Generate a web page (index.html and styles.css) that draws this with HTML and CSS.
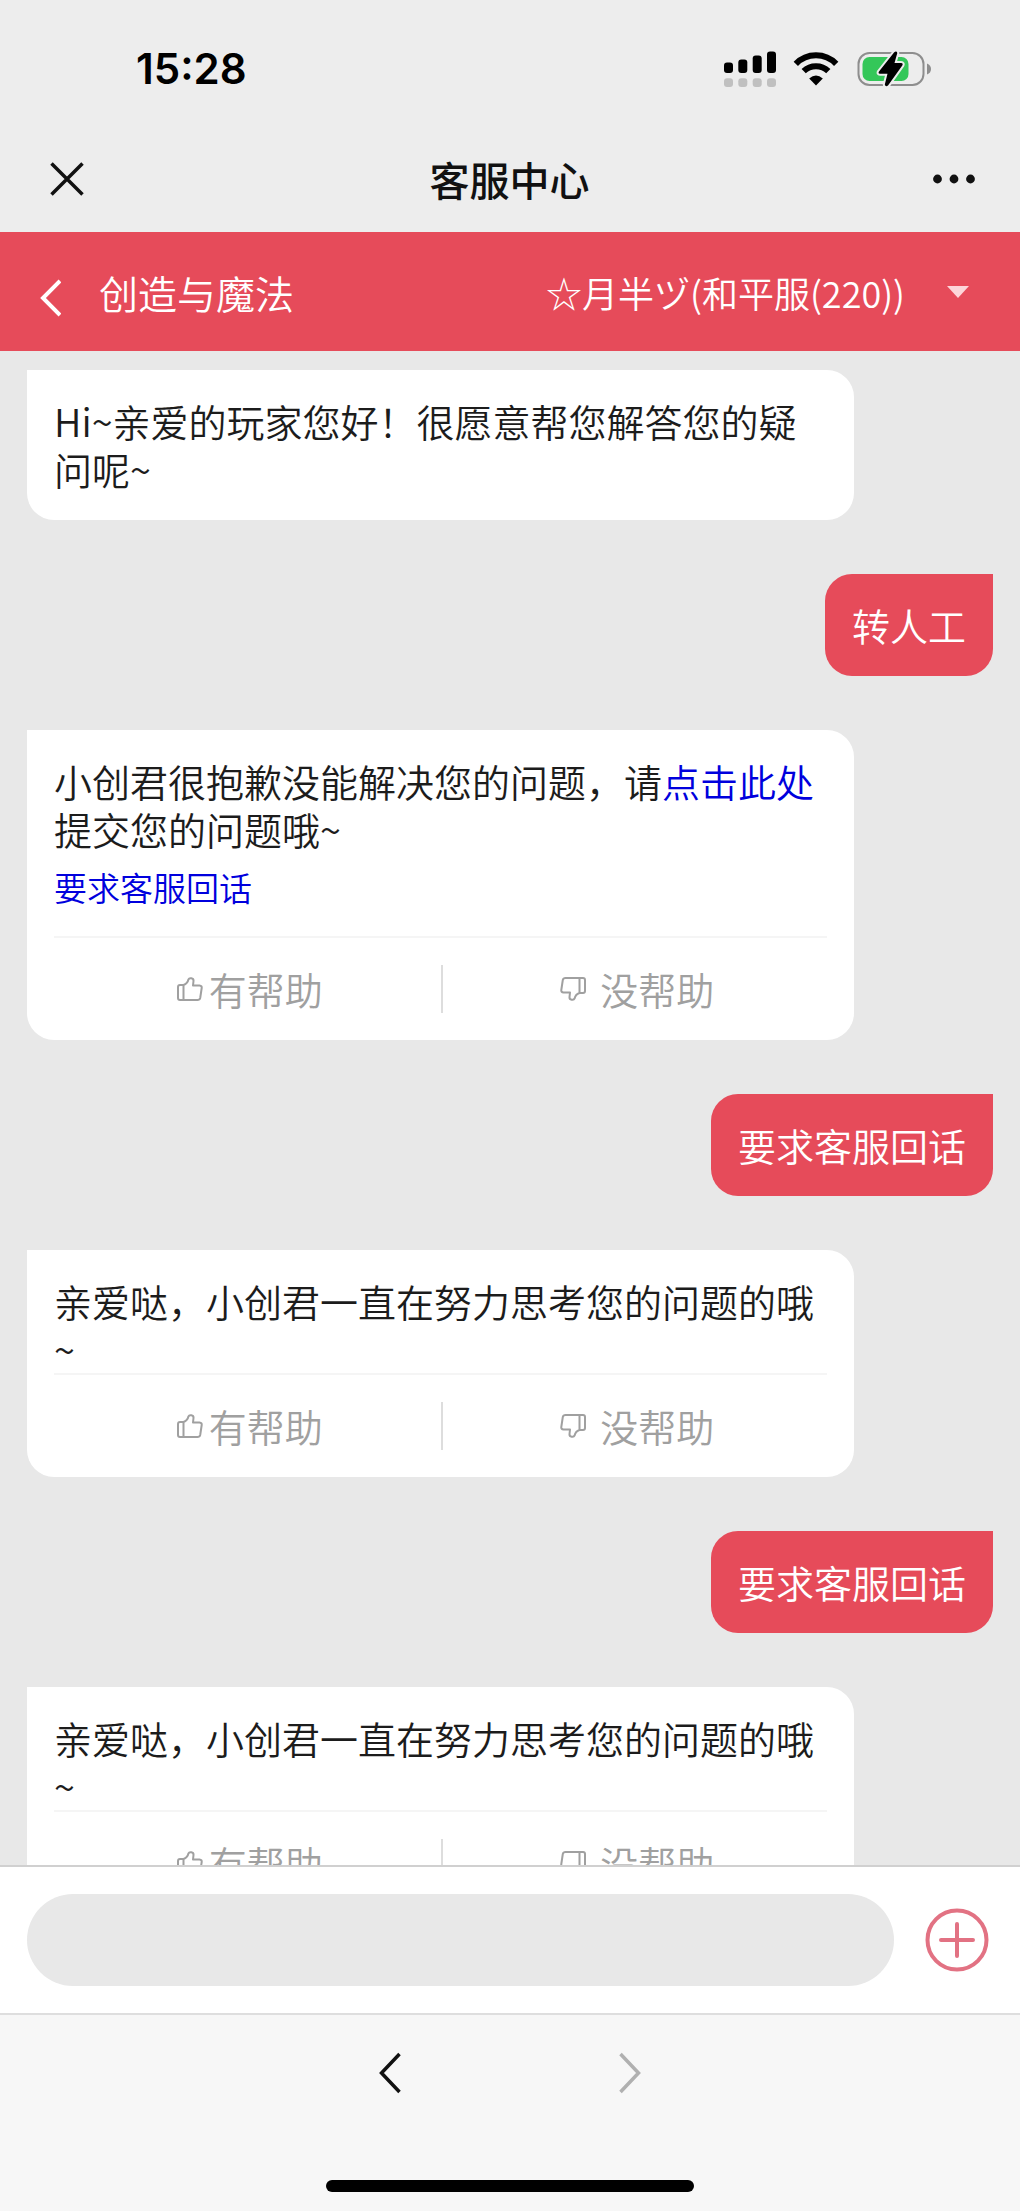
FILE: index.html
```html
<!DOCTYPE html>
<html lang="zh-CN">
<head>
<meta charset="utf-8">
<meta name="viewport" content="width=device-width, initial-scale=1">
<title>客服中心</title>
<link rel="stylesheet" href="styles.css">
</head>
<body>
<svg class="sprite" aria-hidden="true">
  <symbol id="thumb" viewBox="0 0 26 24">
    <path d="M3 8H6.500C9.500 7 11 4.500 11.500 2.300C12.200 .6 16.800 .8 16.500 4L16 8.500H22.500Q25 8.800 24.700 11L23.200 21Q22.700 23 20.500 23H3Q1 23 1 21V10Q1 8 3 8ZM6.500 8V23" fill="none" stroke="currentColor" stroke-width="2" stroke-linejoin="round"/>
  </symbol>
</svg>
<div class="app">
  <div class="status">
    <time class="clock">15:28</time>
    <div class="indicators">
      <svg class="signal" viewBox="0 0 52 36" width="52" height="36" aria-label="信号">
        <rect x="0" y="11.500" width="9" height="10.500" rx="3"/><rect x="14.300" y="8.500" width="9" height="13.500" rx="3"/><rect x="28.700" y="4.500" width="9" height="17.500" rx="3"/><rect x="43" y="0.500" width="9" height="21.500" rx="3"/>
        <g fill="#c0c0c0"><rect x="0" y="27.300" width="9" height="8.700" rx="3"/><rect x="14.300" y="27.300" width="9" height="8.700" rx="3"/><rect x="28.700" y="27.300" width="9" height="8.700" rx="3"/><rect x="43" y="27.300" width="9" height="8.700" rx="3"/></g>
      </svg>
      <svg class="wifi" viewBox="0 0 46 36" width="46" height="36" aria-label="无线网络">
        <path d="M2.800 12.800A28 28 0 0 1 43.200 12.800M10.700 20.200A17.500 17.500 0 0 1 35.300 20.200" fill="none" stroke="#000" stroke-width="6"/>
        <path d="M23 34.500L16.200 27.500Q23 21.500 29.800 27.500Z"/>
      </svg>
      <svg class="battery" viewBox="0 0 76 36" width="76" height="36" aria-label="正在充电">
        <rect x="2.500" y="2" width="65" height="32" rx="11" fill="none" stroke="#8e8e8e" stroke-width="2"/>
        <path d="M71 12.500Q75 14 75 18T71 23.500Z" fill="#8e8e8e"/>
        <rect x="6.500" y="6" width="46" height="24" rx="7" fill="#34c759"/>
        <path d="M38 1.500L23 20.500Q21.800 22.700 24 22.700H31.500L28.800 33.500Q29.500 36.500 32 34.500L46.300 14.500Q47.500 12 45 12H38.500L41.300 2Q40.500-.5 38 1.500Z" stroke="#ededed" stroke-width="4" paint-order="stroke"/>
      </svg>
    </div>
  </div>

  <header class="titlebar">
    <button class="icon-btn" type="button" aria-label="关闭">
      <svg viewBox="0 0 44 36" width="44" height="36"><path d="M7.500 2.500L38.500 33.500M38.500 2.500L7.500 33.500" fill="none" stroke="#111" stroke-width="3.500"/></svg>
    </button>
    <h1 class="page-title">客服中心</h1>
    <button class="icon-btn" type="button" aria-label="更多">
      <svg viewBox="0 0 42 36" width="42" height="36"><g fill="#111"><circle cx="4.500" cy="18" r="4.400"/><circle cx="21" cy="18" r="4.400"/><circle cx="37.500" cy="18" r="4.400"/></g></svg>
    </button>
  </header>

  <div class="gamebar">
    <a class="game" href="#">
      <svg viewBox="0 0 22 52" width="22" height="52" aria-hidden="true"><path d="M21 15L4 32L21 49" fill="none" stroke="#fff" stroke-width="4"/></svg>
      <span>创造与魔法</span>
    </a>
    <button class="account" type="button">
      <span>☆月半ヅ(和平服(220))</span>
      <svg viewBox="0 0 22 12" width="22" height="12" aria-hidden="true"><path d="M0 0H22L11 12Z" fill="#fdd5d9"/></svg>
    </button>
  </div>

  <main class="chat">
    <article class="bubble agent"><p>Hi~亲爱的玩家您好！很愿意帮您解答您的疑问呢~</p></article>
    <article class="bubble user"><p>转人工</p></article>
    <article class="bubble agent">
      <p>小创君很抱歉没能解决您的问题，请<a href="#">点击此处</a>提交您的问题哦~</p>
      <a class="suggestion" href="#">要求客服回话</a>
      <div class="feedback">
        <button class="vote up" type="button"><svg class="thumb"><use href="#thumb"/></svg>有帮助</button>
        <button class="vote down" type="button"><svg class="thumb"><use href="#thumb"/></svg>没帮助</button>
      </div>
    </article>
    <article class="bubble user"><p>要求客服回话</p></article>
    <article class="bubble agent">
      <p>亲爱哒，小创君一直在努力思考您的问题的哦~</p>
      <div class="feedback">
        <button class="vote up" type="button"><svg class="thumb"><use href="#thumb"/></svg>有帮助</button>
        <button class="vote down" type="button"><svg class="thumb"><use href="#thumb"/></svg>没帮助</button>
      </div>
    </article>
    <article class="bubble user"><p>要求客服回话</p></article>
    <article class="bubble agent">
      <p>亲爱哒，小创君一直在努力思考您的问题的哦~</p>
      <div class="feedback">
        <button class="vote up" type="button"><svg class="thumb"><use href="#thumb"/></svg>有帮助</button>
        <button class="vote down" type="button"><svg class="thumb"><use href="#thumb"/></svg>没帮助</button>
      </div>
    </article>
  </main>

  <form class="composer">
    <input class="message" type="text" aria-label="输入消息">
    <button class="icon-btn" type="button" aria-label="添加">
      <svg viewBox="0 0 64 64" width="64" height="64"><g fill="none" stroke="#e27283" stroke-width="4"><circle cx="32" cy="32" r="29.500"/><path d="M16 32H48M32 16V48" stroke-linecap="round"/></g></svg>
    </button>
  </form>

  <footer class="browser">
    <nav class="history">
      <button class="icon-btn" type="button" aria-label="后退"><svg viewBox="0 0 24 42" width="24" height="42"><path d="M21.500 2L3.500 21L21.500 40" fill="none" stroke="#111" stroke-width="3.500"/></svg></button>
      <button class="icon-btn" type="button" aria-label="前进"><svg viewBox="0 0 24 42" width="24" height="42"><path d="M2.500 2L20.500 21L2.500 40" fill="none" stroke="#b0b0b0" stroke-width="3.500"/></svg></button>
    </nav>
    <div class="home-indicator"></div>
  </footer>
</div>
</body>
</html>
```
FILE: styles.css
```css
* { box-sizing: border-box; }

body {
  margin: 0;
  color: #1c1c1c;
  font-family: "Noto Sans CJK SC", "Noto Sans", sans-serif;
  font-size: 38px;
  font-weight: 350;
  line-height: 48px;
}

button {
  margin: 0;
  padding: 0;
  border: 0;
  background: none;
  color: inherit;
  font: inherit;
  cursor: pointer;
}

a { color: #0000dd; text-decoration: none; }
p, h1 { margin: 0; }
svg { display: block; flex: none; }

.sprite { position: absolute; width: 0; height: 0; }

.app {
  display: flex;
  flex-direction: column;
  height: 100vh;
  background: #e8e8e8;
}

.icon-btn { display: flex; align-items: center; }

/* Phone status bar */
.status {
  display: flex;
  align-items: center;
  justify-content: space-between;
  height: 126px;
  padding: 12px 88px 0 136px;
  background: #ededed;
}

.clock {
  color: #000;
  font-family: Inter, "Liberation Sans", sans-serif;
  font-size: 42px;
  font-weight: 600;
}

.indicators { display: flex; align-items: center; gap: 17px; }

/* Page title */
.titlebar {
  display: grid;
  grid-template-columns: 1fr auto 1fr;
  align-items: center;
  height: 106px;
  padding: 0 45px 0 44px;
  background: #ededed;
}

.titlebar .icon-btn:last-child { justify-self: end; }

.page-title { color: #111; font-size: 40px; font-weight: 500; }

/* Game and account bar */
.gamebar {
  display: flex;
  align-items: center;
  justify-content: space-between;
  height: 119px;
  padding: 0 51px 0 39px;
  background: #e64b5a;
  color: #fff;
}

.game {
  display: flex;
  align-items: center;
  gap: 38px;
  color: #fff;
  font-size: 39px;
}

.account {
  display: flex;
  align-items: center;
  gap: 42px;
  font-size: 36px;
}

/* Conversation */
.chat {
  display: flex;
  flex: 1;
  flex-direction: column;
  gap: 54px;
  min-height: 0;
  padding: 19px 27px 27px;
  overflow-y: auto;
  scrollbar-width: none;
}

.bubble {
  flex: none;
  padding: 27px;
  border-radius: 27px;
  overflow-wrap: anywhere;
}

.agent {
  width: calc(100% - 139px);
  border-top-left-radius: 0;
  background: #fff;
}

.agent:has(.feedback) { padding-bottom: 0; }

.user {
  align-self: flex-end;
  border-top-right-radius: 0;
  background: #e64b5a;
  color: #fff;
}

.suggestion { display: block; padding: 10px 0 25px; font-size: 33px; }

.feedback {
  display: grid;
  grid-template-columns: 1fr 1fr;
  padding: 27px 0;
  border-top: 2px solid #f5f5f5;
}

.vote {
  display: flex;
  align-items: center;
  justify-content: center;
  padding-left: 5px;
  color: #a0a0a0;
}

.up { gap: 6px; }
.down { gap: 14px; border-left: 2px solid #ddd; }

.thumb { width: 26px; height: 24px; }
.down .thumb { transform: rotate(180deg); }

/* Message box */
.composer {
  display: flex;
  align-items: center;
  gap: 31px;
  padding: 27px 31px 27px 27px;
  border-top: 2px solid #d0d0d0;
  background: #fff;
}

.message {
  flex: 1;
  min-width: 0;
  height: 92px;
  padding: 0 46px;
  border: 0;
  border-radius: 46px;
  background: #e8e8e8;
  font: inherit;
}

/* Browser controls */
.browser {
  display: flex;
  flex-direction: column;
  align-items: center;
  gap: 50px;
  padding-bottom: 19px;
  border-top: 2px solid #dedede;
  background: #f7f7f7;
}

.history {
  display: flex;
  align-items: center;
  gap: 216px;
  height: 115px;
}

.home-indicator {
  width: 36%;
  height: 12px;
  border-radius: 6px;
  background: #000;
}
```
